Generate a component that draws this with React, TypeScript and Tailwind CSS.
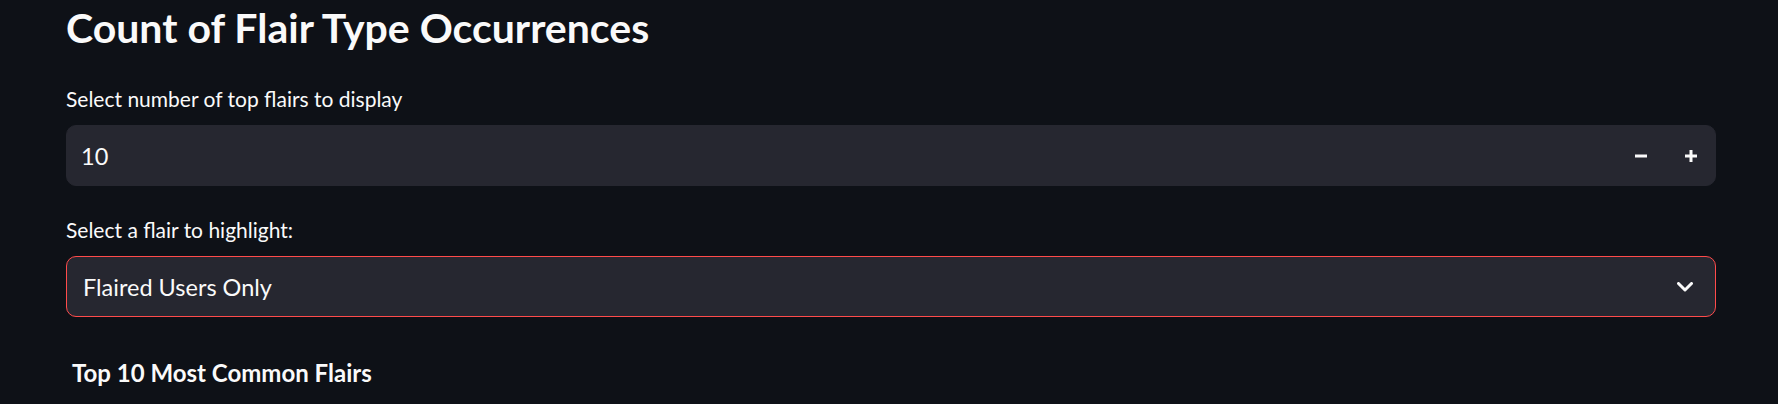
import React from "react";

function Minus() {
  return (
    <svg width="12" height="12" viewBox="0 0 12 12" className="block">
      <rect x="0" y="4.5" width="12" height="3" fill="#fafafa" />
    </svg>
  );
}

function Plus() {
  return (
    <svg width="12" height="12" viewBox="0 0 12 12" className="block">
      <rect x="0" y="4.5" width="12" height="3" fill="#fafafa" />
      <rect x="4.5" y="0" width="3" height="12" fill="#fafafa" />
    </svg>
  );
}

function Chevron() {
  return (
    <svg width="16" height="10" viewBox="0 0 16 10" className="block">
      <polyline
        points="1.5,1.5 8,8 14.5,1.5"
        fill="none"
        stroke="#fafafa"
        strokeWidth="3"
        strokeLinecap="round"
        strokeLinejoin="round"
      />
    </svg>
  );
}

export default function App() {
  return (
    <div
      className="min-h-[404px] bg-[#0e1117] text-[#fafafa] overflow-hidden"
      style={{ fontFamily: "Lato, 'Noto Sans', sans-serif" }}
    >
      <div className="ml-[66px] w-[1650px] pt-[3px]">
        <h1 className="text-[41px] font-bold leading-[50px]">
          Count of Flair Type Occurrences
        </h1>
        <label className="mt-[32px] block text-[21px] leading-[28px]">
          Select number of top flairs to display
        </label>
        <div className="mt-[12px] flex h-[61px] items-center rounded-[10px] border border-[#262730] bg-[#262730] pl-[14px] pr-[18px]">
          <span className="flex-1 text-[23.5px] leading-[30px]">10</span>
          <div className="flex items-center gap-[38px]">
            <Minus />
            <Plus />
          </div>
        </div>
        <label className="mt-[30px] block text-[21px] leading-[28px]">
          Select a flair to highlight:
        </label>
        <div className="mt-[12px] flex h-[61px] items-center rounded-[10px] border border-[#ff4b4b] bg-[#262730] pl-[16px] pr-[22px]">
          <span className="flex-1 text-[23.5px] leading-[30px]">Flaired Users Only</span>
          <Chevron />
        </div>
        <h3 className="mt-[41px] pl-[6px] text-[24px] font-bold leading-[30px]">
          Top 10 Most Common Flairs
        </h3>
      </div>
    </div>
  );
}
